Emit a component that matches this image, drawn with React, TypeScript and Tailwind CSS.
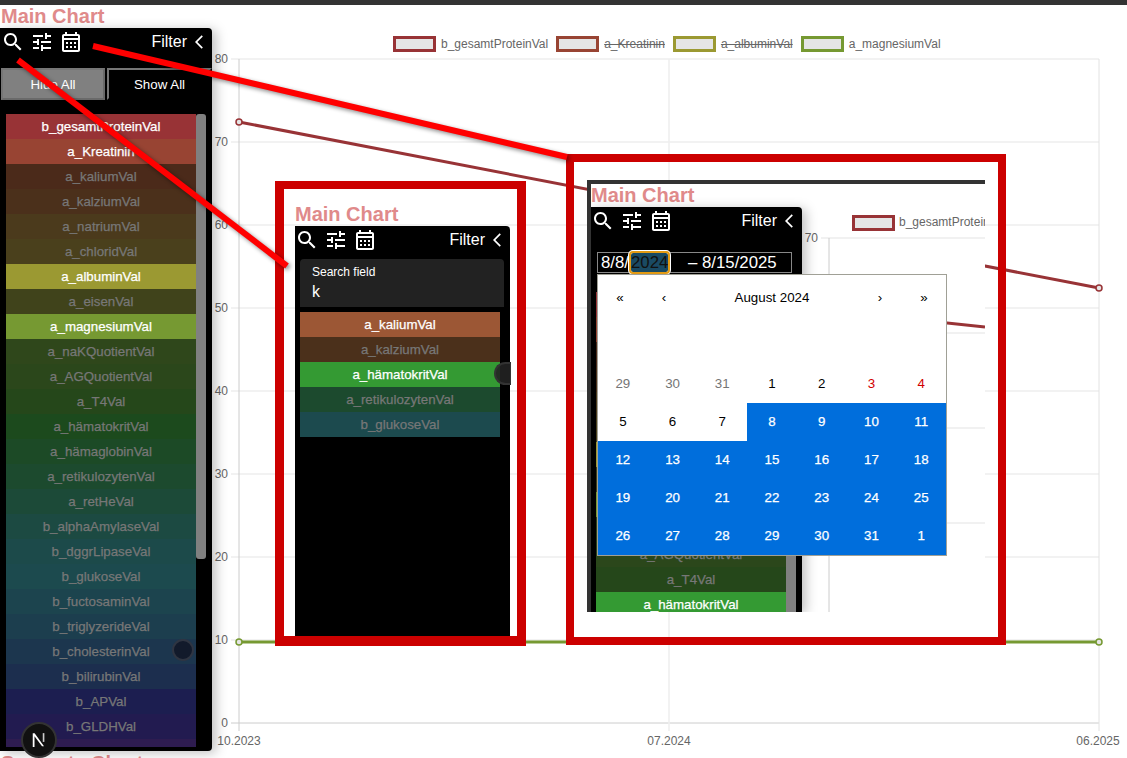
import React from "react";

const sans = "font-['Liberation_Sans',Arial,sans-serif]";

const ROWS = [
  { name: "b_gesamtProteinVal", off: "bg-[#4a1c1e]", on: "bg-[#983336]" },
  { name: "a_Kreatinin", off: "bg-[#4a221c]", on: "bg-[#984433]" },
  { name: "a_kaliumVal", off: "bg-[#4b2a1a]", on: "bg-[#9c5735]" },
  { name: "a_kalziumVal", off: "bg-[#4b301b]" },
  { name: "a_natriumVal", off: "bg-[#4b3a1c]" },
  { name: "a_chloridVal", off: "bg-[#4a401c]" },
  { name: "a_albuminVal", off: "bg-[#4a481c]", on: "bg-[#9b9932]" },
  { name: "a_eisenVal", off: "bg-[#40431b]" },
  { name: "a_magnesiumVal", off: "bg-[#3a471b]", on: "bg-[#769932]" },
  { name: "a_naKQuotientVal", off: "bg-[#2f471b]" },
  { name: "a_AGQuotientVal", off: "bg-[#2b471b]" },
  { name: "a_T4Val", off: "bg-[#25471a]" },
  { name: "a_hämatokritVal", off: "bg-[#1c4a1d]", on: "bg-[#349a33]" },
  { name: "a_hämaglobinVal", off: "bg-[#1c4a26]" },
  { name: "a_retikulozytenVal", off: "bg-[#1c4a2e]" },
  { name: "a_retHeVal", off: "bg-[#1c4a38]" },
  { name: "b_alphaAmylaseVal", off: "bg-[#1c4a42]" },
  { name: "b_dggrLipaseVal", off: "bg-[#1c4a4a]" },
  { name: "b_glukoseVal", off: "bg-[#1c4a4e]" },
  { name: "b_fuctosaminVal", off: "bg-[#1c444e]" },
  { name: "b_triglyzerideVal", off: "bg-[#1c3e4e]" },
  { name: "b_cholesterinVal", off: "bg-[#1c364e]" },
  { name: "b_bilirubinVal", off: "bg-[#1c2e4e]" },
  { name: "b_APVal", off: "bg-[#1c1e50]" },
  { name: "b_GLDHVal", off: "bg-[#221b50]" },
  { name: "b_GGTVal", off: "bg-[#2e1c50]" },
];

const byName = (name: string) => ROWS.find((r) => r.name === name)!;

const MAIN_ON = ["b_gesamtProteinVal", "a_Kreatinin", "a_albuminVal", "a_magnesiumVal"];
const NESTED_ON = [...MAIN_ON, "a_hämatokritVal"];

const Row = ({ name, active }: { name: string; active: boolean }) => {
  const row = byName(name);
  return (
    <div
      className={`h-[25px] shrink-0 flex items-center justify-center text-[13.3px] [-webkit-text-stroke:0.25px] ${
        active ? `${row.on} text-white` : `${row.off} text-[#777]`
      }`}
    >
      {name}
    </div>
  );
};

const SearchIcon = () => (
  <svg viewBox="0 0 24 24" className="w-6 h-6 fill-white">
    <path d="M15.5 14h-.79l-.28-.27C15.41 12.59 16 11.11 16 9.5 16 5.91 13.09 3 9.5 3S3 5.91 3 9.5 5.91 16 9.5 16c1.61 0 3.09-.59 4.23-1.57l.27.28v.79l5 4.99L20.49 19l-4.99-5zm-6 0C7.01 14 5 11.99 5 9.5S7.01 5 9.5 5 14 7.01 14 9.5 11.99 14 9.5 14z" />
  </svg>
);

const TuneIcon = () => (
  <svg viewBox="0 0 24 24" className="w-6 h-6 fill-white">
    <path d="M3 17v2h6v-2H3zM3 5v2h10V5H3zm10 16v-2h8v-2h-8v-2h-2v6h2zM7 9v2H3v2h4v2h2V9H7zm14 4v-2H11v2h10zm-6-4h2V7h4V5h-4V3h-2v6z" />
  </svg>
);

const CalendarIcon = () => (
  <svg viewBox="0 0 24 24" className="w-6 h-6 fill-white">
    <path d="M19 4h-1V2h-2v2H8V2H6v2H5c-1.11 0-1.99.9-1.99 2L3 20c0 1.1.89 2 2 2h14c1.1 0 2-.9 2-2V6c0-1.1-.9-2-2-2zm0 16H5V10h14v10zm0-12H5V6h14v2zM9 14H7v-2h2v2zm4 0h-2v-2h2v2zm4 0h-2v-2h2v2zm-8 4H7v-2h2v2zm4 0h-2v-2h2v2zm4 0h-2v-2h2v2z" />
  </svg>
);

const PanelHeader = ({ className }: { className: string }) => (
  <div className={`flex items-center ${className}`}>
    <div className="flex gap-[5px]">
      <SearchIcon />
      <TuneIcon />
      <CalendarIcon />
    </div>
    <div className="ml-auto flex items-center pr-[5px] text-white text-base">
      <span>Filter</span>
      <svg viewBox="0 0 24 24" className="w-4 h-4 fill-white ml-[4px]">
        <path d="M17.77 3.77 16 2 6 12l10 10 1.77-1.77L9.54 12z" />
      </svg>
    </div>
  </div>
);

const Heading = ({ children }: { children: React.ReactNode }) => (
  <h2 className="h-[23px] pl-px text-[20px] leading-[23px] font-bold text-[#e08a8a]">{children}</h2>
);

const MainPanel = () => (
  <aside className="absolute left-0 top-[28px] w-[212px] h-[723px] bg-black rounded-tr-[4px] rounded-br-[4px] shadow-[4px_2px_12px_rgba(0,0,0,0.25)]">
    <PanelHeader className="pt-[2px] pl-px" />
    <div className="flex gap-[2px] pl-px mt-[14px] text-[13.33px] text-white">
      <button className="w-[104px] h-[32px] pt-px bg-[#808080] border-2 border-t-[#767676] border-l-[#767676] border-r-[#6a6a6a] border-b-[#6a6a6a]">
        Hide All
      </button>
      <button className="w-[105px] h-[32px] pt-px bg-black border-2 border-t-[#767676] border-l-[#767676] border-r-black border-b-black">
        Show All
      </button>
    </div>
    <div className="flex pl-[6px] mt-[14px] h-[633px] overflow-hidden">
      <div className="w-[190px] flex flex-col">
        {ROWS.map((r) => (
          <Row key={r.name} name={r.name} active={MAIN_ON.includes(r.name)} />
        ))}
      </div>
      <div className="w-[10px] h-[445px] bg-[#808080] rounded-[3px]" />
    </div>
    <div className="absolute left-[172px] top-[611px] w-[22px] h-[22px] rounded-full bg-[#121a2b] border-2 border-[#2f3542]" />
  </aside>
);

const SEARCH_ROWS = [
  { name: "a_kaliumVal", active: true },
  { name: "a_kalziumVal", active: false },
  { name: "a_hämatokritVal", active: true },
  { name: "a_retikulozytenVal", active: false },
  { name: "b_glukoseVal", active: false },
];

const SearchPanel = () => (
  <div className="absolute left-[275px] top-[181px] w-[251px] h-[465px] border-x-[9px] border-t-[8px] border-b-[10px] border-[#cc0000]">
    <div className="pl-[11px] pt-[14px] w-[226px]">
      <Heading>
        <span className="-ml-px">Main Chart</span>
      </Heading>
      <div className="relative w-[215px] h-[410px] bg-black rounded-tr-[4px]">
        <PanelHeader className="pt-[2px]" />
        <div className="ml-[5px] mt-[7px] w-[204px] h-[48px] bg-[#222] rounded-t-[4px] pl-[12px] pt-[6px] text-white">
          <div className="text-[12px] leading-[15px]">Search field</div>
          <div className="text-base leading-[24px]">k</div>
        </div>
        <div className="ml-[5px] mt-[5px] w-[200px] flex flex-col">
          {SEARCH_ROWS.map((r) => (
            <Row key={r.name} name={r.name} active={r.active} />
          ))}
        </div>
        <div className="absolute left-[199px] top-[136px] w-[17px] h-[23px] rounded-l-full bg-[#222]/90 border-2 border-r-0 border-[#333]" />
      </div>
    </div>
  </div>
);

const WEEKS = [
  [29, 30, 31, 1, 2, 3, 4],
  [5, 6, 7, 8, 9, 10, 11],
  [12, 13, 14, 15, 16, 17, 18],
  [19, 20, 21, 22, 23, 24, 25],
  [26, 27, 28, 29, 30, 31, 1],
];

const dayClass = (week: number, col: number) => {
  if (week === 0) {
    if (col < 3) return "text-[#757575]";
    if (col > 4) return "text-[#d10000]";
    return "text-black";
  }
  if (week === 1 && col < 3) return "text-black";
  return "bg-[#006edc] text-white [-webkit-text-stroke:0.25px]";
};

const Calendar = () => (
  <div className="absolute z-20 left-[6px] top-[67px] w-[350px] h-[282px] bg-white border border-[#a0a096] text-[13.33px] text-black">
    <div className="flex h-[44px] pt-px items-center text-center">
      <span className="w-[44px]">«</span>
      <span className="w-[44px]">‹</span>
      <span className="flex-1">August 2024</span>
      <span className="w-[44px]">›</span>
      <span className="w-[44px]">»</span>
    </div>
    <div className="h-[46px]" />
    <div className="grid grid-cols-7">
      {WEEKS.map((week, w) =>
        week.map((day, c) => (
          <div key={`${w}-${c}`} className={`h-[38px] pb-px flex items-center justify-center ${dayClass(w, c)}`}>
            {day}
          </div>
        ))
      )}
    </div>
  </div>
);

const NestedChart = () => (
  <svg viewBox="802 207 183 405" className="w-[183px] h-[405px] block">
    {[238, 333, 428, 523].map((y) => (
      <line key={y} x1={821} x2={985} y1={y} y2={y} stroke="#ececec" strokeWidth={1.5} />
    ))}
    <line x1={829} x2={829} y1={238} y2={612} stroke="#ccc" />
    <rect x={853.5} y={216.5} width={40} height={13} fill="#e5e5e5" stroke="#983336" strokeWidth={3} />
    <text x={899} y={226} fontSize={12} fill="#666">b_gesamtProteinVal</text>
    <text x={818} y={242} fontSize={12} fill="#666" textAnchor="end">70</text>
    <line x1={900} x2={985} y1={318} y2={327} stroke="#983336" strokeWidth={3} />
  </svg>
);

const CalendarPanel = () => (
  <>
    <div className="absolute left-[566px] top-[154px] w-[440px] h-[491px] border-8 border-[#cc0000]" />
    <div className="absolute left-[587px] top-[180px] w-[398px] h-[432px] overflow-hidden bg-white border-t-4 border-l-4 border-[#333]">
      <Heading>
        <span className="-ml-px">Main Chart</span>
      </Heading>
      <div className="flex">
        <div className="relative z-10 w-[211px] h-[405px] bg-black rounded-tr-[4px] shadow-[4px_2px_12px_rgba(0,0,0,0.25)]">
          <PanelHeader className="pt-[2px]" />
          <div className="ml-[6px] mt-[19px] w-[195px] h-[21px] border border-[#888] flex items-center pl-[3px] text-[16.8px] text-white">
            <span>8/8/</span>
            <span className="ml-[2px] w-[37px] h-[19px] leading-[19px] text-center bg-[#1a4a63] text-[#111] rounded-[2px] outline-2 outline-[#e39a12] shadow-[0_0_0_3px_#fff]">
              2024
            </span>
            <span className="ml-[20px]">– 8/15/2025</span>
          </div>
          <div className="flex ml-[5px] mt-[19px]">
            <div className="w-[190px] flex flex-col">
              {ROWS.slice(0, 13).map((r) => (
                <Row key={r.name} name={r.name} active={NESTED_ON.includes(r.name)} />
              ))}
            </div>
            <div className="w-[10px] bg-[#808080]" />
          </div>
          <Calendar />
        </div>
        <NestedChart />
      </div>
    </div>
    <div className="absolute left-[635px] top-[283px] w-[23px] h-[23px] rounded-full bg-[#999] border-2 border-[#c6c6c6]" />
  </>
);

const LEGEND = [
  { name: "b_gesamtProteinVal", border: "border-[#983336]", hidden: false },
  { name: "a_Kreatinin", border: "border-[#984433]", hidden: true },
  { name: "a_albuminVal", border: "border-[#9b9932]", hidden: true },
  { name: "a_magnesiumVal", border: "border-[#769932]", hidden: false },
];

const Legend = () => (
  <div className="flex gap-[8px] pl-[393px] mt-[8px] h-[16px] text-[12px] text-[#666]">
    {LEGEND.map((l) => (
      <div key={l.name} className="flex items-center gap-[5px]">
        <span className={`w-[43px] h-[16px] bg-[#e5e5e5] border-[3px] ${l.border}`} />
        <span className={l.hidden ? "line-through" : ""}>{l.name}</span>
      </div>
    ))}
  </div>
);

const TICKS = [80, 70, 60, 50, 40, 30, 20, 10, 0];

const Chart = () => (
  <svg viewBox="0 52 1127 700" className="w-[1127px] h-[700px] block">
    {TICKS.map((t, i) => {
      const y = 59 + i * 83;
      return (
        <g key={t}>
          <line x1={231} x2={1099} y1={y} y2={y} stroke={t === 0 ? "#ccc" : "#eee"} strokeWidth={t === 0 ? 1 : 1.5} />
          <text x={228} y={y + 4} fontSize={12} fill="#666" textAnchor="end">{t}</text>
        </g>
      );
    })}
    <line x1={239} x2={239} y1={59} y2={731} stroke="#ccc" />
    <line x1={669} x2={669} y1={59} y2={731} stroke="#eee" strokeWidth={1.5} />
    <line x1={1099} x2={1099} y1={59} y2={731} stroke="#e2e2e2" />
    <text x={239} y={745} fontSize={12} fill="#666" textAnchor="middle">10.2023</text>
    <text x={669} y={745} fontSize={12} fill="#666" textAnchor="middle">07.2024</text>
    <text x={1098} y={745} fontSize={12} fill="#666" textAnchor="middle">06.2025</text>
    <line x1={239} x2={1099} y1={122} y2={288} stroke="#983336" strokeWidth={3} />
    <line x1={239} x2={1099} y1={642} y2={642} stroke="#769932" strokeWidth={3} />
    <circle cx={239} cy={122} r={3} fill="#e5e5e5" stroke="#983336" strokeWidth={1.5} />
    <circle cx={1099} cy={288} r={3} fill="#e5e5e5" stroke="#983336" strokeWidth={1.5} />
    <circle cx={239} cy={642} r={3} fill="#e5e5e5" stroke="#769932" strokeWidth={1.5} />
    <circle cx={1099} cy={642} r={3} fill="#e5e5e5" stroke="#769932" strokeWidth={1.5} />
  </svg>
);

const Arrows = () => (
  <svg className="absolute left-0 top-0 w-[1127px] h-[758px] drop-shadow-[2px_2px_2px_rgba(0,0,0,0.45)]">
    <line x1={93} y1={46} x2={567} y2={157} stroke="#ff0000" strokeWidth={6} />
    <line x1={18} y1={60} x2={287} y2={266} stroke="#ff0000" strokeWidth={6} />
  </svg>
);

const NextBadge = () => (
  <div className="absolute left-[21px] top-[722px] w-[36px] h-[36px] rounded-full bg-[#111] border-2 border-[#333] flex items-center justify-center">
    <svg viewBox="0 0 16 16" className="w-[20px] h-[20px]">
      <path d="M3 2.5h1.5L12 13h-1.6L4.4 5v8.5H3z" fill="#fff" />
      <rect x="11" y="2.5" width="1.3" height="7" fill="#ccc" />
    </svg>
  </div>
);

export default function App() {
  return (
    <div className={`relative w-[1127px] h-[758px] overflow-hidden bg-white ${sans}`}>
      <div className="h-[5px] bg-[#333]" />
      <Heading>Main Chart</Heading>
      <Legend />
      <Chart />
      <Heading>Separate Chart</Heading>
      <MainPanel />
      <SearchPanel />
      <CalendarPanel />
      <Arrows />
      <NextBadge />
    </div>
  );
}
